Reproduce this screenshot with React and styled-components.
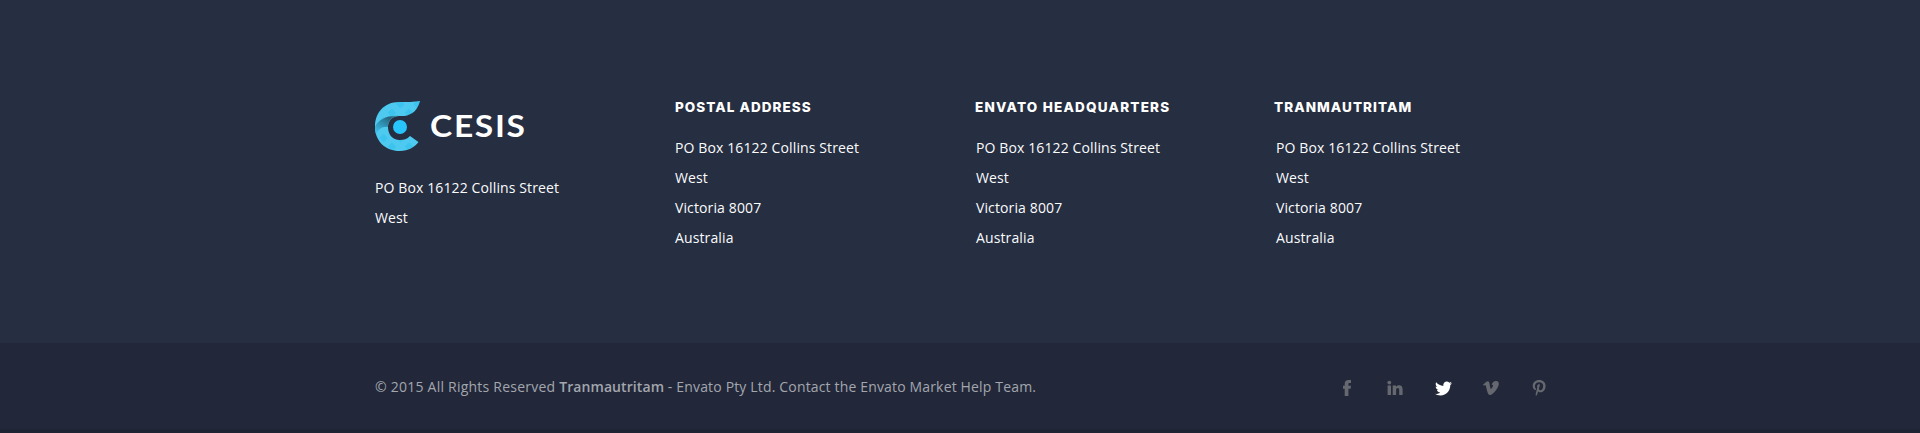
import React from "react";
import styled, { createGlobalStyle } from "styled-components";
import { FaTwitter } from "react-icons/fa";

const GlobalStyle = createGlobalStyle`
  *, *::before, *::after { box-sizing: border-box; }
  body { margin: 0; background: #262e41; font-family: "Open Sans", "Noto Sans", sans-serif; }
`;
const Footer = styled.footer`
  height: 433px;
  display: flex;
  flex-direction: column;
  background: #262e41;
`;
const Container = styled.div`
  width: 1170px;
  margin: 0 auto;
`;
const Columns = styled(Container)`
  flex: none;
  height: 343px;
  padding-top: 100px;
  display: grid;
  grid-template-columns: 300px 300px 300px 270px;
`;
const Column = styled.section``;
const Heading = styled.h3`
  margin: 0 0 19px ${(p) => p.$shift || 0}px;
  height: 14px;
  font: 800 13.5px/14px Inter, sans-serif;
  letter-spacing: ${(p) => p.$tracking}px;
  color: #fff;
  white-space: nowrap;
`;
const Address = styled.address`
  padding-left: ${(p) => p.$inset || 0}px;
  font-style: normal;
  font-size: 14px;
  line-height: 30px;
  letter-spacing: 0.12px;
  color: #fbfcfd;
  white-space: nowrap;
`;
const Line = styled.div``;
const Logo = styled.div`
  height: 73px;
  display: flex;
  align-items: flex-start;
`;
const Mark = styled.svg`
  flex: none;
  display: block;
`;
const Wordmark = styled.span`
  margin-left: 9px;
  font: 700 31px/50px Lato, sans-serif;
  letter-spacing: 1.6px;
  color: #fff;
  transform: scaleX(1.08);
  transform-origin: left;
`;
const Bottom = styled.div`
  height: 90px;
  background: #22283a;
  border-bottom: 4px solid #1e2433;
`;
const BottomRow = styled(Container)`
  height: 86px;
  padding-top: 2px;
  display: flex;
  align-items: center;
  justify-content: space-between;
`;
const Copyright = styled.p`
  margin: 0;
  font-size: 14px;
  line-height: 20px;
  letter-spacing: 0.16px;
  color: #a3a6ad;
  white-space: nowrap;
`;
const Rights = styled.span`
  letter-spacing: 0.23px;
`;
const Strong = styled.strong`
  font-weight: 600;
  letter-spacing: 0.08px;
`;
const Socials = styled.nav`
  display: flex;
  margin: 2px -18px 0 0;
`;
const Social = styled.a`
  width: 48px;
  display: flex;
  justify-content: center;
  align-items: center;
  color: ${(p) => (p.$active ? "#fff" : "#65696f")};
`;
const Glyph = styled.svg`
  display: block;
  width: 16px;
  height: 16px;
  fill: currentColor;
`;

const FacebookGlyph = () => (
  <Glyph viewBox="0 0 16 16">
    <path d="M5.700 16V8.700H4V5.800H5.700V4.200C5.700 1.300 7 0 9.700 0H12V2.900H10.500C9.600 2.900 9.400 3.200 9.400 4V5.800H12L11.600 8.700H9.400V16Z" />
  </Glyph>
);
const LinkedinGlyph = () => (
  <Glyph viewBox="0 0 16 16">
    <circle cx="2.300" cy="2.600" r="1.900" />
    <path d="M.6 5.500H4V15H.6ZM5.700 5.500H9V6.800C9.600 5.900 10.600 5.300 12 5.300C14.500 5.300 15.600 6.800 15.600 9.500V15H12.200V10C12.200 8.700 11.800 8 10.800 8C9.600 8 9.100 8.800 9.100 10.100V15H5.700Z" />
  </Glyph>
);
const VimeoGlyph = () => (
  <Glyph viewBox="0 0 16 16">
    <path d="M0 4.700L3 2C4.900.5 6.100 1.300 6.500 3.600C7 6.800 7.400 8.900 8 8.900C8.500 8.900 10 6.600 10 5.500C10.100 4.600 9.400 4.500 8.500 4.900C9.500 1.900 11.200.7 13.400.9C15.200 1 16 2.200 15.800 4.300C15.400 8.100 10 15 7.100 15C5.300 15 4.500 12.700 3.600 8.900C3 6.300 2.700 4.900 2 5C1.800 5 1.400 5.300.8 5.700Z" />
  </Glyph>
);
const PinterestGlyph = () => (
  <Glyph viewBox="0 0 16 16">
    <path d="M8.300 0C4.400 0 1.700 2.600 1.700 5.800C1.700 7.700 2.600 9.500 4.300 10.100C4.700 10.200 4.800 9.700 4.900 9.200C5 8.800 4.900 8.700 4.600 8.300C3 5.900 4.500 2.200 8 2.200C10.800 2.200 12.200 3.700 12.200 5.800C12.200 8.500 11 10.300 9.300 10.300C8.300 10.300 7.700 9.600 7.900 8.600L8.900 5.100C9 3.700 6.300 3.700 6.100 6.300C6.100 7 6.300 7.500 6.300 7.500L4.800 13.200C4.600 14.200 4.700 15.300 4.900 16C6 15.100 6.700 13.600 7.100 11.300C7.500 11.900 8.500 12.300 9.400 12.300C12.300 12.300 14.600 9.600 14.600 5.900C14.600 2.600 12 0 8.300 0Z" />
  </Glyph>
);

const columns = [
  { title: "POSTAL ADDRESS", tracking: 1.06, inset: 0 },
  { title: "ENVATO HEADQUARTERS", tracking: 1.22, inset: 1 },
  { title: "TRANMAUTRITAM", tracking: 1.06, inset: 1, shift: -1 },
];
const lines = ["PO Box 16122 Collins Street", "West", "Victoria 8007", "Australia"];
const socials = [
  { name: "Facebook", Icon: FacebookGlyph },
  { name: "LinkedIn", Icon: LinkedinGlyph },
  { name: "Twitter", Icon: FaTwitter, active: true },
  { name: "Vimeo", Icon: VimeoGlyph },
  { name: "Pinterest", Icon: PinterestGlyph },
];

function CesisMark() {
  return (
    <Mark width="46" height="52" viewBox="0 0 46 52" aria-hidden="true">
      <defs>
        <linearGradient id="fold" x1="0" y1="1" x2="0.9" y2="0">
          <stop offset="0" stopColor="#40c8f1" />
          <stop offset="0.45" stopColor="#2f93b5" />
          <stop offset="0.8" stopColor="#28637c" />
          <stop offset="1" stopColor="#3292b2" />
        </linearGradient>
        <pattern id="plaid" width="12" height="12" patternUnits="userSpaceOnUse" patternTransform="rotate(45)">
          <path d="M0 0h6v12H0zM0 0h12v6H0z" fill="#fff" fillOpacity="0.09" />
        </pattern>
        <path id="body" d="M45 1C40 2 31 2 24 2C9 2 0 13 0 26.500C0 41 10 51 25 51C33 51 40 47 43.500 42L35 36C32 39 29 40 25 40C17 40 13 34 13 27C13 21 17 16 24 16H29C38 15 43 9 45 1Z" />
      </defs>
      <use href="#body" fill="#3cc4ee" />
      <use href="#body" fill="url(#plaid)" />
      <path d="M0 27C3 20 12 15 24 16C17 16 13 21 13 27C7 26 3 30 1 34C0 31 0 29 0 27Z" fill="url(#fold)" />
      <circle cx="25" cy="27" r="7" fill="#27c5fb" />
    </Mark>
  );
}

export default function App() {
  return (
    <>
      <GlobalStyle />
      <Footer>
        <Columns>
          <Column>
            <Logo>
              <CesisMark />
              <Wordmark>CESIS</Wordmark>
            </Logo>
            <Address>
              {lines.slice(0, 2).map((line) => <Line key={line}>{line}</Line>)}
            </Address>
          </Column>
          {columns.map((column) => (
            <Column key={column.title}>
              <Heading $tracking={column.tracking} $shift={column.shift}>{column.title}</Heading>
              <Address $inset={column.inset}>
                {lines.map((line) => <Line key={line}>{line}</Line>)}
              </Address>
            </Column>
          ))}
        </Columns>
        <Bottom>
          <BottomRow>
            <Copyright>
              <Rights>© 2015 All Rights Reserved </Rights><Strong>Tranmautritam</Strong> - Envato Pty Ltd. Contact the Envato Market Help Team.
            </Copyright>
            <Socials>
              {socials.map(({ name, Icon, active }) => (
                <Social key={name} aria-label={name} $active={active}><Icon size={17} /></Social>
              ))}
            </Socials>
          </BottomRow>
        </Bottom>
      </Footer>
    </>
  );
}
